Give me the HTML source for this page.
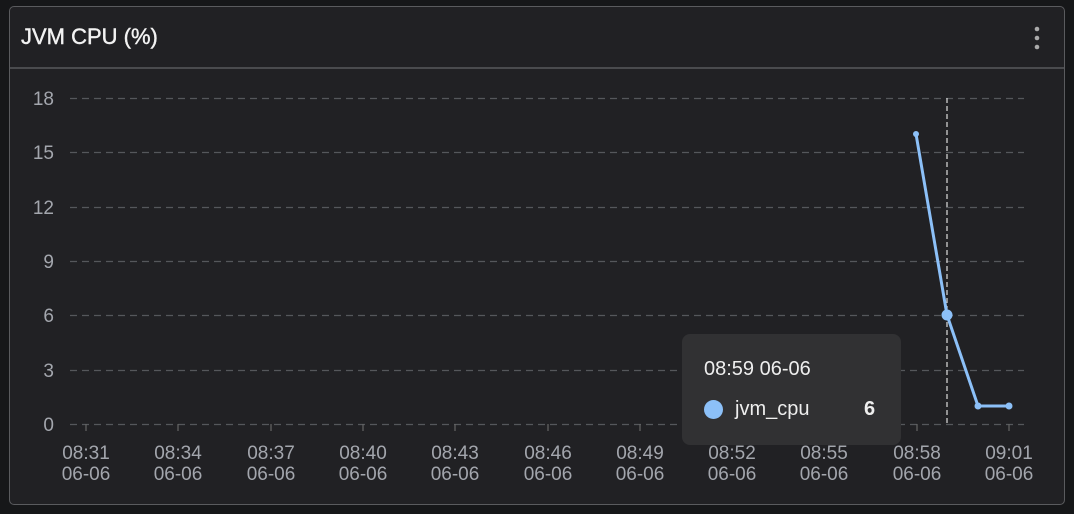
<!DOCTYPE html>
<html><head><style>
body{margin:0;width:1074px;height:514px;background:#161719;overflow:hidden;font-family:"Liberation Sans",Arial,sans-serif}
.p{position:absolute;left:9px;top:6px;width:1054px;height:497px;background:#212124;border:1px solid #5a5b5e;border-radius:5px}
.h{position:absolute;left:0;top:0;right:0;height:60px;border-bottom:2px solid #4a4b4e}
.t{position:absolute;left:11px;top:17px;color:#f2f2f2;font-size:22px;-webkit-text-stroke:0.4px #f2f2f2}
.tt{position:absolute;left:682px;top:334px;width:219px;height:111px;background:#313133;border-radius:8px;color:#eee;font-size:20px}
</style></head><body>
<div class="p"><div class="h"><div class="t">JVM CPU (%)</div>
<svg style="position:absolute;right:23px;top:18px" width="8" height="30"><circle cx="4" cy="4" r="2.3" fill="#aaa"/><circle cx="4" cy="13" r="2.3" fill="#aaa"/><circle cx="4" cy="22" r="2.3" fill="#aaa"/></svg></div></div>
<svg style="position:absolute;left:0;top:0" width="1074" height="514" font-family="Liberation Sans,Arial,sans-serif" font-size="19" fill="#a3a6ad">
<g stroke="#55575b" stroke-dasharray="7,5" stroke-width="1.2">
<line x1="70" x2="1024" y1="98.5" y2="98.5"/><line x1="70" x2="1024" y1="152.5" y2="152.5"/><line x1="70" x2="1024" y1="207.5" y2="207.5"/><line x1="70" x2="1024" y1="261.5" y2="261.5"/><line x1="70" x2="1024" y1="315.5" y2="315.5"/><line x1="70" x2="1024" y1="370.5" y2="370.5"/><line x1="70" x2="1024" y1="424.5" y2="424.5"/></g>
<g text-anchor="end"><text x="54" y="105">18</text><text x="54" y="159">15</text><text x="54" y="214">12</text><text x="54" y="268">9</text><text x="54" y="322">6</text><text x="54" y="377">3</text><text x="54" y="431">0</text></g>
<g stroke="#666" stroke-width="1.2"><line x1="86" x2="86" y1="424" y2="431"/><line x1="178" x2="178" y1="424" y2="431"/><line x1="271" x2="271" y1="424" y2="431"/><line x1="363" x2="363" y1="424" y2="431"/><line x1="455" x2="455" y1="424" y2="431"/><line x1="548" x2="548" y1="424" y2="431"/><line x1="640" x2="640" y1="424" y2="431"/><line x1="732" x2="732" y1="424" y2="431"/><line x1="824" x2="824" y1="424" y2="431"/><line x1="917" x2="917" y1="424" y2="431"/><line x1="1009" x2="1009" y1="424" y2="431"/></g>
<g text-anchor="middle">
<text x="86" y="459">08:31</text><text x="86" y="480">06-06</text>
<text x="178" y="459">08:34</text><text x="178" y="480">06-06</text>
<text x="271" y="459">08:37</text><text x="271" y="480">06-06</text>
<text x="363" y="459">08:40</text><text x="363" y="480">06-06</text>
<text x="455" y="459">08:43</text><text x="455" y="480">06-06</text>
<text x="548" y="459">08:46</text><text x="548" y="480">06-06</text>
<text x="640" y="459">08:49</text><text x="640" y="480">06-06</text>
<text x="732" y="459">08:52</text><text x="732" y="480">06-06</text>
<text x="824" y="459">08:55</text><text x="824" y="480">06-06</text>
<text x="917" y="459">08:58</text><text x="917" y="480">06-06</text>
<text x="1009" y="459">09:01</text><text x="1009" y="480">06-06</text></g>
<line x1="947" x2="947" y1="98" y2="424" stroke="#ddd" stroke-dasharray="5,3" stroke-width="1.2"/>
<polyline points="916,134 947,315 978,406 1009,406" fill="none" stroke="#8cc0f8" stroke-width="3"/>
<g fill="#8cc0f8"><circle cx="916" cy="134" r="3"/><circle cx="947" cy="315" r="5.5"/><circle cx="978" cy="406" r="3.5"/><circle cx="1009" cy="406" r="3.5"/></g>
</svg>
<div class="tt"><div style="position:absolute;left:22px;top:24px">08:59 06-06</div>
<div style="position:absolute;left:22px;top:66px;width:19px;height:19px;border-radius:50%;background:#8cc0f8"></div>
<div style="position:absolute;left:53px;top:64px">jvm_cpu</div>
<div style="position:absolute;left:182px;top:64px;font-weight:bold">6</div></div>
</body></html>
